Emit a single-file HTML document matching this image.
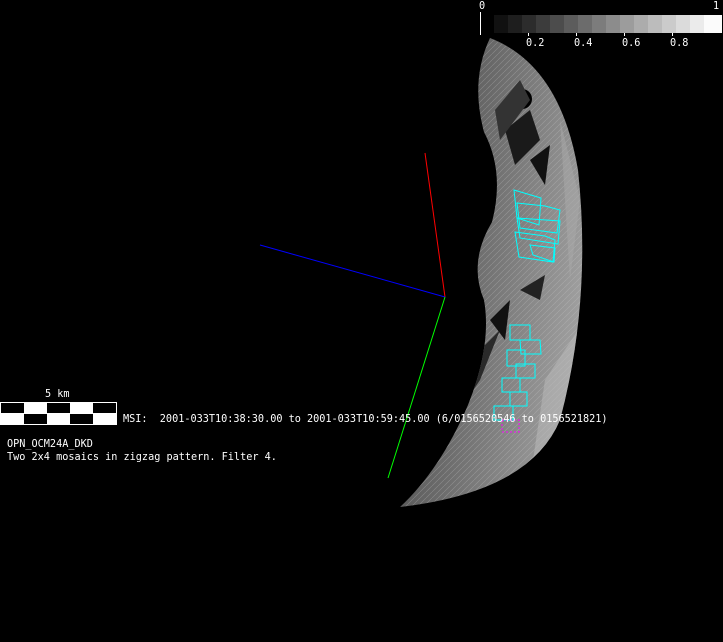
<!DOCTYPE html>
<html><head><style>
html,body{margin:0;padding:0;background:#000;}
body{width:723px;height:642px;position:relative;overflow:hidden;font-family:"DejaVu Sans Mono","Liberation Mono",monospace;color:#fff;font-size:10.2px;}
.t{position:absolute;white-space:pre;line-height:12px;}
</style></head><body>
<svg width="723" height="642" style="position:absolute;left:0;top:0">
<defs>
<linearGradient id="g" x1="0" y1="0" x2="1" y2="0.3">
<stop offset="0" stop-color="#3a3a3a"/><stop offset="0.5" stop-color="#6a6a6a"/><stop offset="1" stop-color="#a0a0a0"/>
</linearGradient>
<pattern id="p" width="6" height="6" patternUnits="userSpaceOnUse">
<path d="M0 6L6 0" stroke="#ccc" stroke-width="0.6" opacity="0.35"/>
</pattern>
<clipPath id="c"><path d="M490,38 Q560,65 578,170 Q592,300 560,420 Q530,492 400,507 Q440,470 468,405 Q492,345 484,300 Q468,262 492,222 Q505,172 484,132 Q470,80 490,38 Z"/></clipPath>
</defs>
<g clip-path="url(#c)">
<rect x="380" y="30" width="220" height="490" fill="url(#g)"/>
<rect x="380" y="30" width="220" height="490" fill="url(#p)"/>
<path d="M380,520 L440,440 L480,380 L500,330 L470,360 L430,430 Z" fill="#2a2a2a"/>
<ellipse cx="522" cy="99" rx="10" ry="10" fill="#000"/>
<path d="M505,130 L530,110 L540,140 L515,165 Z" fill="#1a1a1a"/>
<path d="M530,160 L550,145 L545,185 Z" fill="#111"/>
<path d="M495,110 L520,80 L530,100 L500,140 Z" fill="#333"/>
<path d="M520,290 L545,275 L540,300 Z" fill="#222"/>
<path d="M490,320 L510,300 L505,340 Z" fill="#111"/>
<path d="M545,380 L578,330 L560,470 L530,480 Z" fill="#bbb" opacity="0.5"/>
<path d="M560,120 L580,200 L570,280 Z" fill="#aaa" opacity="0.5"/>
</g>
<line x1="425" y1="153" x2="445" y2="297" stroke="#f00" stroke-width="1"/>
<line x1="260" y1="245" x2="445" y2="297" stroke="#00f" stroke-width="1"/>
<line x1="445" y1="297" x2="388" y2="478" stroke="#0f0" stroke-width="1"/>
<g fill="none" stroke="#0ff" stroke-width="1">
<path d="M514,190 L541,198 L539,225 L517,218 Z"/>
<path d="M517,203 L545,206 L560,210 L557,233 L520,228 Z"/>
<path d="M517,218 L560,221 L558,244 L520,238 Z"/>
<path d="M515,232 L545,236 L555,240 L553,262 L519,257 Z"/>
<path d="M530,245 L555,248 L554,262 L533,255 Z"/>
<path d="M510,325 L530,325 L530,340 L510,340 Z"/>
<path d="M520,340 L540,340 L541,354 L521,354 Z"/>
<path d="M507,350 L525,350 L525,366 L507,366 Z"/>
<path d="M516,364 L535,364 L535,378 L516,378 Z"/>
<path d="M502,378 L520,378 L520,392 L502,392 Z"/>
<path d="M510,392 L527,392 L527,406 L510,406 Z"/>
<path d="M494,406 L513,406 L513,420 L494,420 Z"/>
</g>
<path d="M502,420 L519,420 L519,432 L502,432 Z" fill="none" stroke="#f0f" stroke-dasharray="2,2"/>
<g>
<rect x="494" y="15" width="14" height="18" fill="#111"/>
<rect x="508" y="15" width="14" height="18" fill="#1e1e1e"/>
<rect x="522" y="15" width="14" height="18" fill="#2c2c2c"/>
<rect x="536" y="15" width="14" height="18" fill="#3c3c3c"/>
<rect x="550" y="15" width="14" height="18" fill="#4c4c4c"/>
<rect x="564" y="15" width="14" height="18" fill="#5c5c5c"/>
<rect x="578" y="15" width="14" height="18" fill="#6c6c6c"/>
<rect x="592" y="15" width="14" height="18" fill="#7c7c7c"/>
<rect x="606" y="15" width="14" height="18" fill="#8c8c8c"/>
<rect x="620" y="15" width="14" height="18" fill="#9c9c9c"/>
<rect x="634" y="15" width="14" height="18" fill="#acacac"/>
<rect x="648" y="15" width="14" height="18" fill="#bcbcbc"/>
<rect x="662" y="15" width="14" height="18" fill="#cbcbcb"/>
<rect x="676" y="15" width="14" height="18" fill="#dbdbdb"/>
<rect x="690" y="15" width="14" height="18" fill="#ebebeb"/>
<rect x="704" y="15" width="18" height="18" fill="#fbfbfb"/>
<line x1="480.5" y1="12" x2="480.5" y2="35" stroke="#fff"/>
<line x1="528.5" y1="33" x2="528.5" y2="36" stroke="#fff"/>
<line x1="576.5" y1="33" x2="576.5" y2="36" stroke="#fff"/>
<line x1="624.5" y1="33" x2="624.5" y2="36" stroke="#fff"/>
<line x1="672.5" y1="33" x2="672.5" y2="36" stroke="#fff"/>
</g>
<rect x="0.5" y="402.5" width="116" height="22" fill="#fff" stroke="#fff"/>
<rect x="1" y="403" width="23" height="10" fill="#000"/>
<rect x="47" y="403" width="23" height="10" fill="#000"/>
<rect x="93" y="403" width="23" height="10" fill="#000"/>
<rect x="24" y="414" width="23" height="10" fill="#000"/>
<rect x="70" y="414" width="23" height="10" fill="#000"/>
</svg>
<div class="t" style="left:479px;top:1px;">0</div>
<div class="t" style="left:713px;top:1px;">1</div>
<div class="t" style="left:526px;top:38px;">0.2</div>
<div class="t" style="left:574px;top:38px;">0.4</div>
<div class="t" style="left:622px;top:38px;">0.6</div>
<div class="t" style="left:670px;top:38px;">0.8</div>
<div class="t" style="left:45px;top:389px;">5 km</div>
<div class="t" style="left:123px;top:414px;">MSI:  2001-033T10:38:30.00 to 2001-033T10:59:45.00 (6/0156520546 to 0156521821)</div>
<div class="t" style="left:7px;top:439px;">OPN_OCM24A_DKD</div>
<div class="t" style="left:7px;top:452px;">Two 2x4 mosaics in zigzag pattern. Filter 4.</div>
</body></html>
